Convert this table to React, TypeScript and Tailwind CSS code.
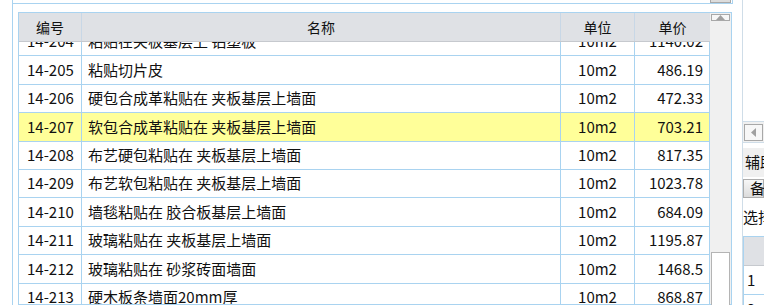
const rows = [
  { code: '14-204', name: '粘贴在夹板基层上 铝塑板', unit: '10m2', price: '1140.02' },
  { code: '14-205', name: '粘贴切片皮', unit: '10m2', price: '486.19' },
  { code: '14-206', name: '硬包合成革粘贴在 夹板基层上墙面', unit: '10m2', price: '472.33' },
  { code: '14-207', name: '软包合成革粘贴在 夹板基层上墙面', unit: '10m2', price: '703.21' },
  { code: '14-208', name: '布艺硬包粘贴在 夹板基层上墙面', unit: '10m2', price: '817.35' },
  { code: '14-209', name: '布艺软包粘贴在 夹板基层上墙面', unit: '10m2', price: '1023.78' },
  { code: '14-210', name: '墙毯粘贴在 胶合板基层上墙面', unit: '10m2', price: '684.09' },
  { code: '14-211', name: '玻璃粘贴在 夹板基层上墙面', unit: '10m2', price: '1195.87' },
  { code: '14-212', name: '玻璃粘贴在 砂浆砖面墙面', unit: '10m2', price: '1468.5' },
  { code: '14-213', name: '硬木板条墙面20mm厚', unit: '10m2', price: '868.87' },
];

const selected = '14-207';

export default function App() {
  return (
    <div className="flex h-[305px] w-[764px] overflow-hidden bg-white text-[#111] font-['Noto_Sans_CJK_SC','Noto_Sans',sans-serif]">
      {/* Left: quota list */}
      <div className="w-[743px] h-full border-r border-[#cfdde8] shrink-0">
        <div className="ml-[12px] h-full border-l border-[#a9d3f0] flex flex-col">
          {/* bottom of the tree panel above */}
          <div className="h-[4px] w-[720px] border-b border-r border-[#a9d3f0] flex overflow-hidden shrink-0">
            <div className="flex-1 overflow-hidden">
              <div className="mt-[-18px] pl-[34px] text-[15px] leading-[20px] whitespace-nowrap">◢ 14 墙柱面装饰工程</div>
            </div>
            <div className="w-[21px] mr-[1px] bg-[#dcdcdc] border-x border-b border-[#a8a8a8]" />
          </div>

          {/* grid */}
          <div className="mt-[8px] ml-[5px] w-[714px] flex-1 min-h-0 border border-[#a9d3f0] flex">
            <div className="flex-1 min-w-0 flex flex-col">
              <div className="h-[29px] shrink-0 flex bg-[#dfe1e5] border-b border-[#c6c9ce] text-[14px]">
                <div className="w-[63px] border-r border-[#c8d7e6] flex items-center justify-center">编号</div>
                <div className="w-[479px] border-r border-[#c8d7e6] flex items-center justify-center">名称</div>
                <div className="w-[74px] border-r border-[#c8d7e6] flex items-center justify-center">单位</div>
                <div className="w-[75px] flex items-center justify-center">单价</div>
              </div>
              <div className="flex-1 overflow-hidden">
                <div className="mt-[-14px]">
                  {rows.map((r) => (
                    <div
                      key={r.code}
                      className={`h-[28.4px] flex border-b border-[#a9d3f0] text-[15px] ${r.code === selected ? 'bg-[#ffff99]' : 'bg-white'}`}
                    >
                      <div className="w-[63px] border-r border-[#a9d3f0] flex items-center pl-[8px]">{r.code}</div>
                      <div className="w-[479px] border-r border-[#a9d3f0] flex items-center pl-[6px] whitespace-nowrap">{r.name}</div>
                      <div className="w-[74px] border-r border-[#a9d3f0] flex items-center justify-center">{r.unit}</div>
                      <div className="w-[75px] border-r border-[#a9d3f0] flex items-center justify-end pr-[6px]">{r.price}</div>
                    </div>
                  ))}
                </div>
              </div>
            </div>

            {/* vertical scrollbar */}
            <div className="w-[21px] shrink-0 bg-[#f0f0f0] flex flex-col items-center">
              <div className="mt-[1px] w-[19px] h-[19px] border border-[#a8a8a8] bg-[#f7f7f7] flex items-center justify-center">
                <svg width="9" height="5" viewBox="0 0 9 5">
                  <path d="M0 5 L4.5 0 L9 5 Z" fill="#a0a0a0" />
                </svg>
              </div>
              <div className="mt-[231px] w-[19px] h-[60px] border border-[#b4b4b4] bg-white shrink-0" />
            </div>
          </div>
        </div>
      </div>

      {/* Right: side panel, cut off */}
      <div className="w-[21px] shrink-0 h-full flex flex-col overflow-hidden text-[15px]">
        <div className="h-[121px] shrink-0" />
        <div className="h-[22px] shrink-0 border-y border-[#cfdde8] bg-[#f0f0f0] flex items-center pl-[1px]">
          <div className="w-[19px] h-[17px] border border-[#a8a8a8] bg-[#f7f7f7] flex items-center justify-center">
            <svg width="5" height="9" viewBox="0 0 5 9">
              <path d="M5 0 L0 4.5 L5 9 Z" fill="#a0a0a0" />
            </svg>
          </div>
        </div>
        <div className="mt-[5px] h-[29px] shrink-0 bg-[#f0f0f0] flex items-center pl-[2px] whitespace-nowrap">辅助材料</div>
        <div className="mt-[2px] h-[19px] shrink-0 border border-[#adadad] bg-gradient-to-b from-[#f7f7f7] to-[#dcdcdc] flex items-center pl-[6px] whitespace-nowrap">备注</div>
        <div className="h-[38px] shrink-0 flex items-center whitespace-nowrap">选择</div>
        <div className="border-t border-l border-[#a9d3f0]">
          <div className="h-[29px] bg-[#dfe1e5] border-b border-[#c6c9ce]" />
          <div className="h-[29px] border-b border-[#a9d3f0] flex items-center pl-[3px]">1</div>
          <div className="h-[29px] border-b border-[#a9d3f0] flex items-center pl-[3px]">2</div>
        </div>
      </div>
    </div>
  );
}
